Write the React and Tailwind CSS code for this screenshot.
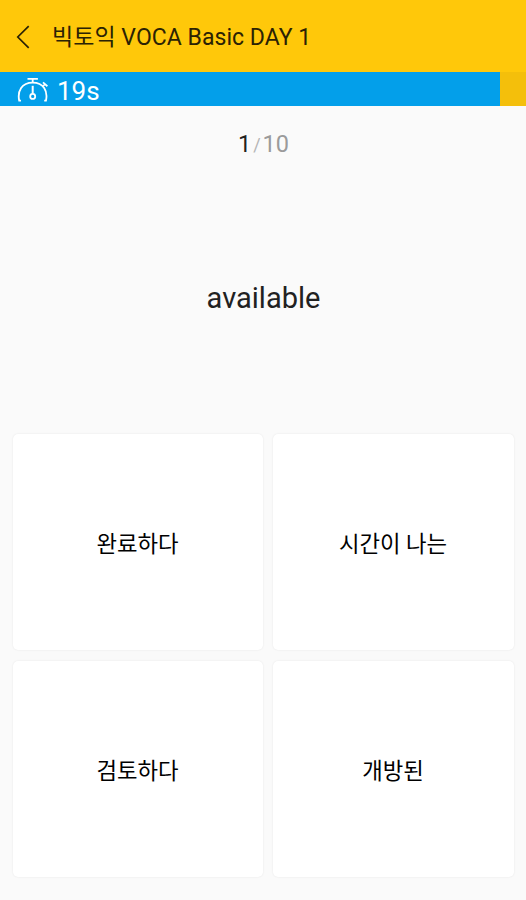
import React, { useState } from 'react';

function StopwatchIcon() {
  return (
    <svg className="h-[26px] w-8 shrink-0" viewBox="0 0 32 26" fill="none" stroke="currentColor">
      <path d="M4 24.6H2.2C.2 15 4.8 6.6 15.7 6.6S31 15 29 24.6h-1.8" strokeWidth="1.8" />
      <path d="M10.5 2.9h10.4M15.7 2.9v3.7M26 6.4l4.4 3.8M26.2 10l1.8-2" strokeWidth="1.8" />
      <path d="M15.7 9.8v8" strokeWidth="2" />
      <circle cx="15.7" cy="20.4" r="2.5" strokeWidth="1.8" />
    </svg>
  );
}

function App() {
  const [selected, setSelected] = useState(null);

  const timeLeft = 19;
  const totalTime = 20;
  const answers = ['완료하다', '시간이 나는', '검토하다', '개방된'];

  return (
    <div className="flex h-[900px] w-[526px] flex-col bg-[#fafafa] font-['Roboto','Noto_Sans_CJK_KR',sans-serif] text-[#212121]">
      {/* Header */}
      <header className="flex h-[72px] shrink-0 items-center bg-[#ffc80a] pl-4 pt-0.5">
        <button className="mr-[21px]" aria-label="Back">
          <svg className="h-6 w-[15px]" viewBox="0 0 15 24" fill="none" stroke="#2b2204" strokeWidth="1.7">
            <path d="M12.7 1.2 1.8 12l10.9 10.8" />
          </svg>
        </button>
        <h1 className="whitespace-nowrap pt-0.5 text-[23px] leading-7 tracking-[0.04px] text-[#2b2204]">
          빅토익 VOCA Basic DAY 1
        </h1>
      </header>

      {/* Timer */}
      <div className="h-[34px] shrink-0 bg-[#f4bf0b]">
        <div
          className="flex h-full items-center bg-[#039fea] pl-[17px] text-white"
          style={{ width: `${(timeLeft / totalTime) * 100}%` }}
        >
          <StopwatchIcon />
          <span className="ml-2 pt-1 text-[26px] leading-8">{timeLeft}s</span>
        </div>
      </div>

      {/* Question */}
      <div className="flex h-[76px] shrink-0 items-center justify-center pl-px pt-0.5 text-[23.5px]">
        <span>1</span>
        <span className="mx-0.5 text-lg text-[#b5b5b5]">/</span>
        <span className="text-[#9b9b9b]">10</span>
      </div>
      <div className="flex h-[252px] shrink-0 items-center justify-center pb-[21px] pl-px">
        <p className="text-[29px] leading-9">available</p>
      </div>

      {/* Answers */}
      <div className="grid grid-cols-[250px_241px] grid-rows-[216px_216px] gap-x-2.5 gap-y-[11px] pl-[12.5px]">
        {answers.map((answer, index) => (
          <button
            key={answer}
            onClick={() => setSelected(index)}
            aria-pressed={selected === index}
            className="rounded-[5px] bg-white pt-1.5 text-[22.3px] text-black shadow-[0_0_2px_rgba(0,0,0,0.09)]"
          >
            {answer}
          </button>
        ))}
      </div>
    </div>
  );
}

export default App;
